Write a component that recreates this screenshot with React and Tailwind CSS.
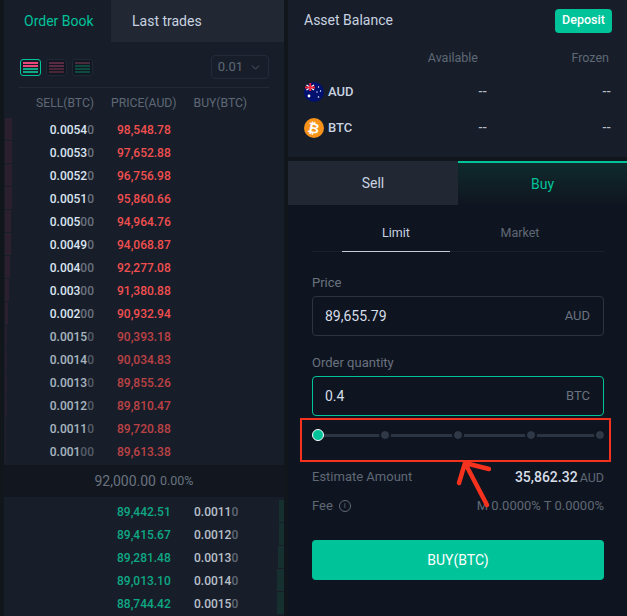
import React from 'react';
import { ChevronDown } from 'lucide-react';

const asks = [
  ['0.0054', '0', '98,548.78', 7],
  ['0.0053', '0', '97,652.88', 7],
  ['0.0052', '0', '96,756.98', 7],
  ['0.0051', '0', '95,860.66', 7],
  ['0.005', '00', '94,964.76', 6],
  ['0.0049', '0', '94,068.87', 6],
  ['0.004', '00', '92,277.08', 5],
  ['0.003', '00', '91,380.88', 4],
  ['0.002', '00', '90,932.94', 3],
  ['0.0015', '0', '90,393.18', 2],
  ['0.0014', '0', '90,034.83', 2],
  ['0.0013', '0', '89,855.26', 2],
  ['0.0012', '0', '89,810.47', 2],
  ['0.0011', '0', '89,720.88', 1],
  ['0.001', '00', '89,613.38', 1],
];

const bids = [
  ['89,442.51', '0.0011', '0', 5],
  ['89,415.67', '0.0012', '0', 5],
  ['89,281.48', '0.0013', '0', 6],
  ['89,013.10', '0.0014', '0', 7],
  ['88,744.42', '0.0015', '0', 7],
];

const LayoutBtn = ({ active, rows }) => (
  <div className={`w-[21px] h-[17px] rounded-[3px] border flex flex-col justify-center gap-[1px] px-[2px] ${active ? 'border-[#00c39a]' : 'border-[#202835] bg-[#121822]'}`}>
    {rows.map((cls, i) => (
      <div key={i} className={`h-[2px] ${cls}`} />
    ))}
  </div>
);

const AskRow = ({ row, dim }) => (
  <div className={`relative flex items-center h-[23px] text-[12px] font-medium ${dim ? 'opacity-75' : ''}`}>
    <div className="absolute left-[1px] top-0 bottom-[1px] bg-[#2c1f2e]" style={{ width: row[3] }} />
    <div className="w-[90px] text-right text-[#dbe5f1]">
      {row[0]}
      <span className="text-[#6a727e]">{row[1]}</span>
    </div>
    <div className="ml-[23px] text-[#f04f4f]">{row[2]}</div>
  </div>
);

const BidRow = ({ row }) => (
  <div className="relative flex items-center h-[23px] text-[12px] font-medium">
    <div className="absolute right-0 top-0 bottom-[1px] bg-[#15302f]" style={{ width: row[3] }} />
    <div className="ml-[113px] w-[77px] text-[#0fa884]">{row[0]}</div>
    <div className="text-[#b9c0cb]">
      {row[1]}
      <span className="text-[#5f6875]">{row[2]}</span>
    </div>
  </div>
);

const Field = ({ label, value, unit, focus }) => (
  <div>
    <div className="text-[13px] leading-[15px] text-[#69727f]">{label}</div>
    <div className={`mt-[6px] h-[40px] rounded-[4px] border flex items-center justify-between pl-[12px] pr-[13px] ${focus ? 'border-[#00c39a]' : 'border-[#2c3440]'}`}>
      <span className="text-[14px] text-[#d5dde8]">{value}</span>
      <span className="text-[13px] text-[#69727f]">{unit}</span>
    </div>
  </div>
);

const SliderDot = ({ className }) => (
  <div className={`relative w-[12px] h-[12px] rounded-full bg-[#2f3846] border-2 border-[#0f1520] bg-clip-padding shrink-0 ${className}`} />
);

const AudFlag = () => (
  <svg width="20" height="20" viewBox="0 0 20 20" className="shrink-0">
    <circle cx="10" cy="10" r="10" fill="#00106e" />
    <path d="M2.5 3 L10 8 M10 3 L2.5 8" stroke="#fff" strokeWidth="1.4" />
    <path d="M1 5.5 H11 M6.2 1 V9" stroke="#f0263c" strokeWidth="2" />
    <circle cx="5" cy="14" r="1.4" fill="#fff" />
    <circle cx="14.5" cy="5" r="0.7" fill="#fff" />
    <circle cx="16.5" cy="9" r="0.7" fill="#fff" />
    <circle cx="13" cy="10" r="0.7" fill="#fff" />
    <circle cx="14.5" cy="15" r="0.8" fill="#fff" />
  </svg>
);

const BtcCoin = () => (
  <div className="w-[20px] h-[20px] rounded-full bg-[#f7931a] shrink-0 flex items-center justify-center text-white text-[14px] font-bold leading-none">
    <span className="rotate-12">₿</span>
  </div>
);

const AssetRow = ({ icon, name }) => (
  <div className="flex items-center h-[36px] text-[13px] font-medium text-[#c8d2e0]">
    <div className="w-[96px] flex items-center gap-[4px]">
      {icon}
      <span>{name}</span>
    </div>
    <div className="w-[87px] text-right text-[#b5bdc9]">--</div>
    <div className="flex-1 text-right text-[#b5bdc9]">--</div>
  </div>
);

export default function App() {
  return (
    <div className="relative w-[627px] h-[616px] overflow-hidden flex bg-[#11151c] font-['Roboto',sans-serif]">
      {/* Order book */}
      <div className="ml-[4px] w-[280px] shrink-0 h-full bg-[#171e2a] flex flex-col">
        <div className="flex h-[42px] text-[14px]">
          <div className="w-[107px] flex items-center pl-[20px] text-[#00c39a]">Order Book</div>
          <div className="flex-1 bg-[#212833] flex items-center pl-[21px] text-[#c8d2e0]">Last trades</div>
        </div>

        <div className="flex items-center justify-between h-[46px] mx-[15px] border-b border-[#222a35] pt-[5px]">
          <div className="flex gap-[5px] ml-[1px]">
            <LayoutBtn active rows={['bg-[#e8487a]', 'bg-[#e8487a]', 'bg-[#0fa884]', 'bg-[#0fa884]']} />
            <LayoutBtn rows={['bg-[#5a2a42]', 'bg-[#5a2a42]', 'bg-[#4a2538]', 'bg-[#4a2538]']} />
            <LayoutBtn rows={['bg-[#4a2a3c]', 'bg-[#0f4a40]', 'bg-[#0f4a40]', 'bg-[#0f4a40]']} />
          </div>
          <div className="w-[58px] h-[24px] rounded-[4px] border border-[#232b38] flex items-center justify-center gap-[6px] text-[13px] text-[#5f6875]">
            0.01
            <ChevronDown size={13} strokeWidth={1.5} />
          </div>
        </div>

        <div className="flex h-[30px] items-center text-[12.2px] text-[#5f6875]">
          <div className="w-[90px] text-right">SELL(BTC)</div>
          <div className="ml-[17px]">PRICE(AUD)</div>
          <div className="ml-[17px]">BUY(BTC)</div>
        </div>

        <div className="flex flex-col">
          {asks.map((row, i) => (
            <AskRow key={row[2]} row={row} dim={i > 8} />
          ))}
        </div>

        <div className="mt-[2px] h-[32px] bg-[#12171f] flex items-center justify-center gap-[4px] text-[#69727f]">
          <span className="text-[14px]">92,000.00</span>
          <span className="text-[12.5px]">0.00%</span>
        </div>

        <div className="flex flex-col pt-[3px]">
          {bids.map((row) => (
            <BidRow key={row[0]} row={row} />
          ))}
        </div>
      </div>

      {/* Right column */}
      <div className="ml-[4px] flex-1 min-w-0 h-full flex flex-col">
        <div className="h-[157px] bg-[#171e2a] px-[16px] shrink-0">
          <div className="flex items-center justify-between h-[40px] pt-[1px]">
            <span className="text-[14px] text-[#c8d2e0]">Asset Balance</span>
            <button className="w-[57px] h-[24px] rounded-[4px] bg-[#00c39a] text-[12.5px] font-medium text-white mr-[-1px]">
              Deposit
            </button>
          </div>
          <div className="flex h-[34px] pt-[2px] items-center text-[12.5px] text-[#5f6875]">
            <div className="w-[174px] text-right">Available</div>
            <div className="flex-1 text-right mr-[2px]">Frozen</div>
          </div>
          <AssetRow icon={<AudFlag />} name="AUD" />
          <AssetRow icon={<BtcCoin />} name="BTC" />
        </div>

        <div className="mt-[4px] flex-1 bg-[#0f1520] flex flex-col">
          <div className="flex h-[44px] text-[14px]">
            <div className="w-[170px] bg-[#212833] flex items-center justify-center text-[#c8d2e0]">Sell</div>
            <div className="flex-1 border-t-2 border-[#00c39a] bg-gradient-to-b from-[#0e2a2c] to-[#0f1520] flex items-center justify-center text-[#00c39a]">
              Buy
            </div>
          </div>

          <div className="ml-[24px] mr-[23px] mt-[9px] flex h-[38px] border-b border-[#1b222d] text-[12.5px]">
            <div className="ml-[30px] w-[108px] border-b-[1px] border-[#c5cbd5] text-center pt-[10px] text-[#c8d2e0] h-[38px]">
              Limit
            </div>
            <div className="w-[140px] text-center pt-[10px] text-[#5f6875]">Market</div>
          </div>

          <div className="ml-[24px] mr-[23px] mt-[23px] flex flex-col">
            <Field label="Price" value="89,655.79" unit="AUD" />
            <div className="h-[19px]" />
            <Field label="Order quantity" value="0.4" unit="BTC" focus />

            <div className="relative mt-[13px] h-[12px] flex items-center">
              <div className="absolute left-[6px] right-[4px] top-[5px] h-[3px] bg-[#2b3442]" />
              <div className="relative w-[12px] h-[12px] rounded-full bg-[#00c39a] border border-white shrink-0" />
              <SliderDot className="ml-[55px]" />
              <SliderDot className="ml-[61px]" />
              <SliderDot className="ml-[61px]" />
              <SliderDot className="ml-[57px]" />
            </div>

            <div className="mt-[28px] flex items-center justify-between h-[16px]">
              <span className="text-[13px] text-[#5f6875]">Estimate Amount</span>
              <span className="flex items-baseline gap-[2px]">
                <span className="text-[14px] font-medium text-[#d5dde8]">35,862.32</span>
                <span className="text-[12.5px] text-[#5f6875]">AUD</span>
              </span>
            </div>

            <div className="mt-[13px] flex items-center justify-between h-[16px] text-[#5f6875]">
              <span className="flex items-center gap-[6px] text-[13px]">
                Fee
                <span className="w-[12px] h-[12px] rounded-full border border-[#5f6875] flex items-center justify-center text-[8px] leading-none">
                  i
                </span>
              </span>
              <span className="text-[13px]">M 0.0000% T 0.0000%</span>
            </div>

            <button className="mt-[26px] h-[40px] rounded-[4px] bg-[#00c39a] text-[14px] text-white">
              BUY(BTC)
            </button>
          </div>
        </div>
      </div>

      {/* Annotation over the slider */}
      <div className="absolute left-[300px] top-[418px] w-[311px] h-[44px] border-2 border-[#f5321e] pointer-events-none" />
      <svg className="absolute left-[450px] top-[455px] pointer-events-none" width="44" height="62" viewBox="0 0 44 62">
        <path d="M37 50 L15 8 M15 8 L9 28 M15 8 L39 14" fill="none" stroke="#f5321e" strokeWidth="4.5" strokeLinecap="round" />
      </svg>
    </div>
  );
}
